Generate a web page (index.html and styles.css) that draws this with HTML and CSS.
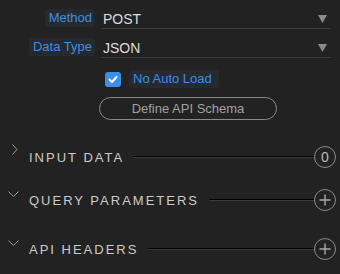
FILE: index.html
```html
<!DOCTYPE html>
<html lang="en">
<head>
    <meta charset="UTF-8">
    <title>API Settings</title>
    <link rel="stylesheet" href="styles.css">
</head>
<body>
    <div class="panel">
        <!-- select rows -->
        <div class="field">
            <span class="label">Method</span>
            <div class="select">POST
                <svg class="arrow" width="9" height="8" viewBox="0 0 9 8"><polygon points="0,0 9,0 4.5,8" fill="#8a8a8a"></polygon></svg>
            </div>
        </div>
        <div class="field field2">
            <span class="label">Data Type</span>
            <div class="select">JSON
                <svg class="arrow" width="9" height="8" viewBox="0 0 9 8"><polygon points="0,0 9,0 4.5,8" fill="#8a8a8a"></polygon></svg>
            </div>
        </div>

        <div class="check">
            <span class="box">
                <svg width="16" height="15" viewBox="0 0 16 15">
                    <polyline points="4.5,7.5 7,10 11.5,5" fill="none" stroke="#fff" stroke-width="2" stroke-linecap="round" stroke-linejoin="round"></polyline>
                </svg>
            </span>
            <span class="label">No Auto Load</span>
        </div>

        <div class="btnrow">
            <button class="btn">Define API Schema</button>
        </div>

        <!-- sections -->
        <div class="sec sec-input">
            <svg class="chev chev-r" width="29" height="12" viewBox="0 0 29 12">
                <polyline points="12.5,0.5 17,5.5 12.5,10.5" fill="none" stroke="#999" stroke-width="1"></polyline>
            </svg>
            <span class="title">INPUT DATA</span>
            <span class="rule"></span>
            <span class="circle">0</span>
        </div>
        <div class="sec sec-query">
            <svg class="chev chev-d" width="29" height="10" viewBox="0 0 29 10">
                <polyline points="8.5,1.5 13.5,6.5 18.5,1.5" fill="none" stroke="#999" stroke-width="1"></polyline>
            </svg>
            <span class="title">QUERY PARAMETERS</span>
            <span class="rule"></span>
            <span class="circle">
                <svg width="12" height="12" viewBox="0 0 12 12">
                    <path d="M6 0.5 V11.5 M0.5 6 H11.5" stroke="#aaa" stroke-width="1.4"></path>
                </svg>
            </span>
        </div>
        <div class="sec sec-api">
            <svg class="chev chev-d" width="29" height="10" viewBox="0 0 29 10">
                <polyline points="8.5,1.5 13.5,6.5 18.5,1.5" fill="none" stroke="#999" stroke-width="1"></polyline>
            </svg>
            <span class="title">API HEADERS</span>
            <span class="rule"></span>
            <span class="circle">
                <svg width="12" height="12" viewBox="0 0 12 12">
                    <path d="M6 0.5 V11.5 M0.5 6 H11.5" stroke="#aaa" stroke-width="1.4"></path>
                </svg>
            </span>
        </div>
    </div>
</body>
</html>
```

FILE: styles.css
```css
html,
body {
    margin: 0;
    padding: 0;
    width: 100%;
    height: 100%;
}

body {
    background: #222222;
    font-family: "Liberation Sans", Arial, sans-serif;
    overflow: hidden;
}

.panel {
    padding-top: 9px;
}

/* select rows */
.field {
    display: grid;
    grid-template-columns: 95px 1fr;
    margin-right: 9px;
    height: 20px;
}

.field2 {
    margin-top: 9px;
}

.label {
    justify-self: end;
    height: 18px;
    line-height: 18px;
    padding: 0 3px 0 4px;
    background: #262a2f;
    border-radius: 3px;
    color: #3d8fe6;
    font-size: 13px;
}

.select {
    display: flex;
    justify-content: space-between;
    align-items: center;
    margin-left: 6px;
    padding-left: 2px;
    height: 19px;
    border-bottom: 1px solid #3c3c3c;
    color: #dddddd;
    font-size: 14px;
}

.arrow {
    display: block;
    margin-right: 4px;
    margin-top: 1px;
}

/* checkbox */
.check {
    display: flex;
    align-items: center;
    gap: 8px;
    margin-top: 12px;
    padding-left: 105px;
    height: 18px;
}

.check .box {
    display: block;
    width: 16px;
    height: 15px;
    background: #3b8fe8;
    border-radius: 3px;
}

.check .box svg {
    display: block;
}

.check .label {
    padding: 0 7px 0 4px;
}

/* button */
.btnrow {
    padding-left: 99px;
    margin-top: 9px;
}

.btn {
    display: block;
    width: 178px;
    height: 23px;
    padding: 0;
    background: transparent;
    border: 1px solid #8a8a8a;
    border-radius: 12px;
    color: #a0a0a0;
    font-family: "Liberation Sans", Arial, sans-serif;
    font-size: 13px;
}

/* sections */
.sec {
    display: flex;
    align-items: center;
    height: 22px;
    margin-right: 4px;
}

.sec-input {
    margin-top: 26px;
}

.sec-query {
    margin-top: 21px;
}

.sec-api {
    margin-top: 27px;
}

.chev {
    flex: none;
    align-self: flex-start;
}

.chev-r {
    margin-top: -2px;
}

.chev-d {
    margin-top: 1px;
}

.title {
    color: #cccccc;
    font-size: 13px;
    letter-spacing: 2px;
    white-space: nowrap;
}

.rule {
    flex: 1;
    height: 0;
    margin-left: 10px;
    border-top: 1px solid #000000;
    border-bottom: 1px solid #3a3a3a;
}

.circle {
    flex: none;
    display: flex;
    justify-content: center;
    align-items: center;
    width: 20px;
    height: 20px;
    border: 1px solid #8a8a8a;
    border-radius: 50%;
    color: #bbbbbb;
    font-size: 14px;
}

.circle svg {
    display: block;
}
```
